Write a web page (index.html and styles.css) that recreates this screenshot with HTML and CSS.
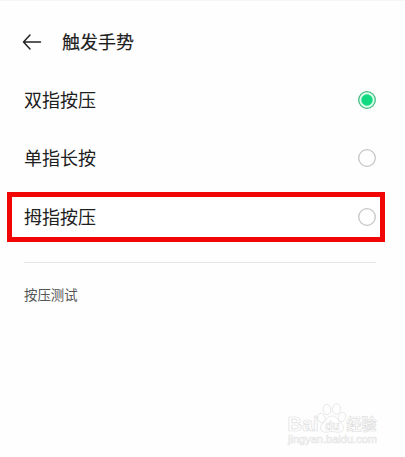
FILE: index.html
```html
<!DOCTYPE html>
<html lang="zh-CN">
<head>
<meta charset="utf-8">
<title>触发手势</title>
<link rel="stylesheet" href="styles.css">
</head>
<body>
<main class="screen">
  <header class="header">
    <svg class="back" width="20" height="16" viewBox="0 0 20 16"><path d="M8 1 1.500 8 8 15M1.500 8H18.500"/></svg>
    <h1 class="title">触发手势</h1>
  </header>
  <section class="options">
    <div class="option"><span>双指按压</span><svg class="radio on" width="20" height="20" viewBox="0 0 20 20"><circle class="ring" cx="10" cy="10" r="8.3"/><circle class="dot" cx="10" cy="10" r="5.7"/></svg></div>
    <div class="option"><span>单指长按</span><svg class="radio" width="20" height="20" viewBox="0 0 20 20"><circle class="ring" cx="10" cy="10" r="8.3"/></svg></div>
    <div class="option marked"><span>拇指按压</span><svg class="radio" width="20" height="20" viewBox="0 0 20 20"><circle class="ring" cx="10" cy="10" r="8.3"/></svg></div>
  </section>
  <hr class="divider">
  <p class="test">按压测试</p>
  <svg class="watermark" width="100" height="50" viewBox="0 0 100 50">
    <g class="brand">
      <text x="1.500" y="30" font-size="20" textLength="31" lengthAdjust="spacingAndGlyphs">Bai</text>
      <ellipse cx="35.500" cy="17" rx="3.600" ry="4.800" transform="rotate(-18 35.500 17)"/>
      <ellipse cx="41" cy="8.500" rx="3.800" ry="5.200" transform="rotate(-8 41 8.500)"/>
      <ellipse cx="50.500" cy="8" rx="3.900" ry="5.200" transform="rotate(10 50.500 8)"/>
      <ellipse cx="56" cy="16" rx="3.600" ry="4.800" transform="rotate(18 56 16)"/>
      <path d="M46 15c-4 0-5.500 4-8.500 6.500-4.500 4-3.500 9.300 1.500 9.700 3 .2 4.500-.7 7-.7s4 .9 7 .7c5-.4 6-5.700 1.500-9.700C51.500 19 50 15 46 15Z"/>
      <text x="39" y="28.500" font-size="13" textLength="14.500" lengthAdjust="spacingAndGlyphs">du</text>
      <text class="cjk" x="60.500" y="29" font-size="15.500" textLength="30" lengthAdjust="spacingAndGlyphs">经验</text>
    </g>
    <text class="url" x="2" y="42" font-size="10" textLength="89" lengthAdjust="spacingAndGlyphs">jingyan.baidu.com</text>
  </svg>
</main>
</body>
</html>
```
FILE: styles.css
```css
* { box-sizing: border-box; }
body {
  margin: 0;
  background: #fefefe;
  color: #202020;
  font-family: "Noto Sans CJK SC", sans-serif;
}
.screen {
  position: relative;
  height: 457px;
  overflow: hidden;
  border-top: 1px solid #f6f6f6;
  padding: 20px 20px 0 7px;
}
.header {
  display: flex;
  align-items: center;
  height: 42px;
  padding-left: 15px;
  gap: 20px;
}
.back { fill: none; stroke: #222; stroke-width: 1.5; stroke-linecap: round; stroke-linejoin: round; }
.title { margin: 0; padding-bottom: 2px; font-size: 18px; font-weight: 400; line-height: 26px; -webkit-text-stroke: .15px #202020; }
.options { padding-top: 12px; }
.option {
  display: flex;
  align-items: center;
  justify-content: space-between;
  height: 50px;
  margin-bottom: 8px;
  padding: 0 8px 0 17px;
  font-size: 18px;
  line-height: 26px;
}
.option span { padding-bottom: 2px; }
.option.marked {
  margin-bottom: 0;
  margin-top: 9px;
  border: 5px solid #f20505;
  padding: 0 3px 0 12px;
  background: #fff;
}
.radio { fill: none; }
.ring { stroke: #c5c5c5; stroke-width: 1.3; }
.on .ring { stroke: #48bd82; fill: #d9fbe9; }
.dot { fill: #10d980; }
.divider { height: 1px; margin: 20px 9px 0 17px; border: 0; background: #e5e5e5; }
.test { margin: 21px 0 0 17px; font-size: 13.4px; line-height: 20px; color: #555; }
.watermark { position: absolute; left: 286px; top: 400px; font-family: "Liberation Sans", sans-serif; }
.brand { fill: #fff; stroke: #dedede; stroke-width: .7; font-weight: 700; }
.brand .cjk { font-family: "Noto Sans CJK SC", sans-serif; }
.url { fill: #fff; stroke: #e6e6e6; stroke-width: .6; }
```
